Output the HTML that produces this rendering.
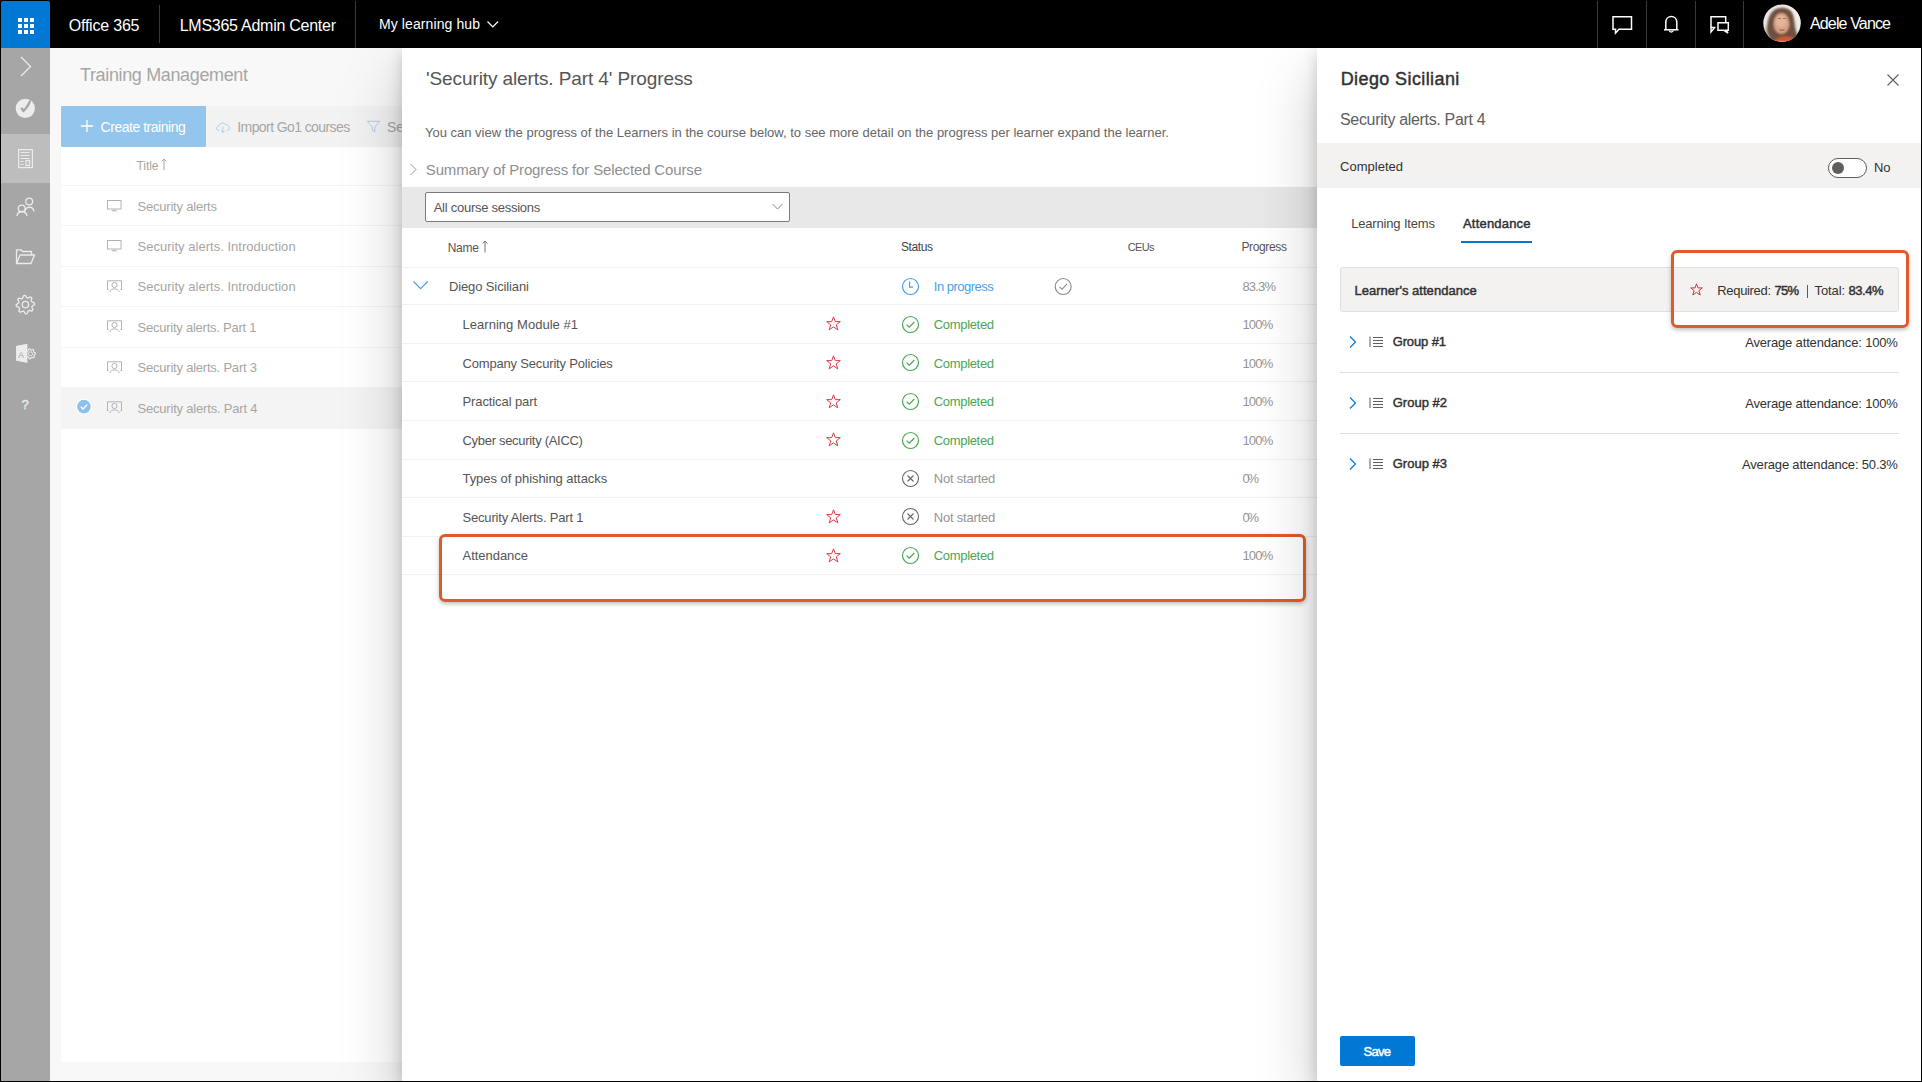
<!DOCTYPE html>
<html><head><meta charset="utf-8">
<style>
html,body{margin:0;padding:0;}
body{width:1922px;height:1082px;position:relative;overflow:hidden;background:#fff;font-family:"Liberation Sans",sans-serif;}
.t{position:absolute;white-space:nowrap;line-height:1;}
.r{position:absolute;}
svg{position:absolute;overflow:visible;}
</style></head><body>
<div class="r" style="left:0px;top:48px;width:50px;height:1034px;background:#a6a6a6;"></div>
<div class="r" style="left:1px;top:134px;width:49px;height:49px;background:#bdbdbd;"></div>
<div class="r" style="left:50px;top:48px;width:352px;height:1034px;background:#f8f8f8;"></div>
<div class="r" style="left:61px;top:147px;width:341px;height:915px;background:#ffffff;"></div>
<div class="r" style="left:61px;top:106px;width:341px;height:41px;background:#f2f2f2;"></div>
<div class="r" style="left:61px;top:106px;width:145px;height:41px;background:#94c5ec;border-radius:1px;"></div>
<div class="r" style="left:61px;top:387px;width:341px;height:41px;background:#f4f4f4;"></div>
<div class="r" style="left:61px;top:185px;width:341px;height:1px;background:#f5f5f5;"></div>
<div class="r" style="left:61px;top:225px;width:341px;height:1px;background:#f5f5f5;"></div>
<div class="r" style="left:61px;top:266px;width:341px;height:1px;background:#f5f5f5;"></div>
<div class="r" style="left:61px;top:306px;width:341px;height:1px;background:#f5f5f5;"></div>
<div class="r" style="left:61px;top:347px;width:341px;height:1px;background:#f5f5f5;"></div>
<div class="r" style="left:61px;top:387px;width:341px;height:1px;background:#f5f5f5;"></div>
<div class="r" style="left:61px;top:428px;width:341px;height:1px;background:#f5f5f5;"></div>
<svg style="left:0px;top:48px;" width="50" height="380" viewBox="0 0 50 380">
<g fill="none" stroke="#ececec" stroke-width="1.3">
 <path d="M21 9 L30.5 18.5 L21 28"/>
</g>
<circle cx="25.3" cy="60.4" r="9.6" fill="#ececec"/>
<path d="M20.3 60.2 L22.3 59.2 L23.8 61.3 C26 58 28 55 29.5 52 L31 53.2 C30.5 56 28 60 24.5 63.5 L23 64.5 Z" fill="#a6a6a6"/>
<g fill="none" stroke="#ececec" stroke-width="1.2">
 <rect x="18.6" y="101.6" width="13.8" height="18" />
 <path d="M20.5 104.5h9 M20.5 107.5h9 M20.5 110.5h9 M20.5 113.5h3 M20.5 116.5h3"/>
 <rect x="26" y="112.5" width="3.5" height="5"/>
</g>
<g fill="none" stroke="#ececec" stroke-width="1.3">
 <circle cx="29.2" cy="153.5" r="3.4"/>
 <path d="M24.5 164 C 25.5 158, 33 157.5, 34 163.5"/>
 <circle cx="21.7" cy="160.5" r="3.4"/>
 <path d="M17 168 C 18 162, 26 162, 27 168"/>
</g>
<g fill="none" stroke="#ececec" stroke-width="1.3" stroke-linejoin="round">
 <path d="M16.5 215.5 V201.8 H21 L22.5 203.5 H31.5 V207"/>
 <path d="M16.5 215.5 L20 207 H34.5 L31 215.5 Z"/>
</g>
</svg>
<svg style="left:0px;top:0px;" width="50" height="420" viewBox="0 0 50 420">
<path d="M34.42,302.77 L34.60,304.57 L32.27,305.94 L31.88,307.26 L33.07,309.68 L31.93,311.08 L29.31,310.41 L28.10,311.06 L27.23,313.62 L25.43,313.80 L24.06,311.47 L22.74,311.08 L20.32,312.27 L18.92,311.13 L19.59,308.51 L18.94,307.30 L16.38,306.43 L16.20,304.63 L18.53,303.26 L18.92,301.94 L17.73,299.52 L18.87,298.12 L21.49,298.79 L22.70,298.14 L23.57,295.58 L25.37,295.40 L26.74,297.73 L28.06,298.12 L30.48,296.93 L31.88,298.07 L31.21,300.69 L31.86,301.90 Z" fill="none" stroke="#ececec" stroke-width="1.3" stroke-linejoin="round"/>
<circle cx="25.4" cy="304.6" r="3.2" fill="none" stroke="#ececec" stroke-width="1.3"/>
<path d="M16.2 346 L27.2 344 V362.7 L16.2 360.5 Z" fill="#ececec"/>
<text x="18.3" y="357.5" font-family="Liberation Sans" font-size="8.5" fill="#a6a6a6">A</text>
<path d="M35.40,352.81 L35.50,353.92 L34.18,354.74 L33.88,355.53 L34.33,357.01 L33.52,357.78 L32.06,357.26 L31.25,357.52 L30.38,358.80 L29.27,358.65 L28.77,357.18 L28.06,356.71 L26.52,356.82 L25.94,355.86 L26.78,354.55 L26.70,353.71 L25.65,352.57 L26.05,351.52 L27.59,351.36 L28.20,350.77 L28.44,349.24 L29.51,348.90 L30.59,350.00 L31.44,350.12 L32.78,349.35 L33.71,349.97 L33.53,351.50 L33.96,352.24 Z" fill="none" stroke="#ececec" stroke-width="1.1"/><circle cx="30.5" cy="353.8" r="2" fill="none" stroke="#ececec" stroke-width="1"/>
<path d="M16.2 346 L27.2 344 V362.7 L16.2 360.5 Z" fill="#ececec"/>
<text x="18.3" y="357.5" font-family="Liberation Sans" font-size="8.5" fill="#a6a6a6">A</text>
<text x="21.4" y="408.6" font-family="Liberation Sans" font-size="13" fill="#ececec" stroke="#ececec" stroke-width="0.4">?</text>
</svg>
<div class="t" style="left:80.00px;top:66.00px;font-size:18px;color:#a8a6a4;letter-spacing:-0.358px;">Training Management</div>
<div class="t" style="left:100.60px;top:120.00px;font-size:14px;color:#ffffff;letter-spacing:-0.475px;">Create training</div>
<svg style="left:80px;top:119px;" width="14" height="14" viewBox="0 0 14 14"><path d="M7 1 V13 M1 7 H13" stroke="#fff" stroke-width="1.3"/></svg>
<svg style="left:214px;top:120px;" width="20" height="16" viewBox="0 0 20 16"><path d="M5 10.5 C1.8 10.5 1.5 6.5 4.8 6 C5.2 3 9.8 2 11.6 4.6 C14.8 4.2 16.2 7.5 14.8 9.8 C14 10.5 13.2 10.5 12.8 10.5" fill="none" stroke="#b9c9e3" stroke-width="1"/><path d="M8.8 6.5 V12.5 M6.8 10.5 L8.8 12.5 L10.8 10.5" fill="none" stroke="#b9c9e3" stroke-width="1"/></svg>
<div class="t" style="left:237.30px;top:120.00px;font-size:14px;color:#a8a6a4;letter-spacing:-0.591px;">Import Go1 courses</div>
<svg style="left:366px;top:120px;" width="16" height="14" viewBox="0 0 16 14"><path d="M1.3 1.3 H13.7 L8.8 7 V11.8 L6.2 10.2 V7 Z" fill="none" stroke="#b9c9e3" stroke-width="1"/></svg>
<div class="t" style="left:387.00px;top:120.00px;font-size:14px;color:#a8a6a4;">Se</div>
<div class="t" style="left:136.50px;top:160.00px;font-size:12px;color:#a8a6a4;letter-spacing:-0.062px;">Title</div>
<svg style="left:161px;top:158px;" width="6" height="14" viewBox="0 0 6 14"><path d="M3 1 V12 M0.8 3.2 L3 1 L5.2 3.2" fill="none" stroke="#a8a6a4" stroke-width="1"/></svg>
<div class="t" style="left:137.50px;top:200.00px;font-size:13px;color:#a8a6a4;letter-spacing:-0.204px;">Security alerts</div>
<svg style="left:106px;top:200.0px;" width="16" height="12" viewBox="0 0 16 12"><rect x="1.5" y="0.5" width="13.5" height="8.5" fill="none" stroke="#b5b0bb" stroke-width="1"/><path d="M8.2 9 V10.5 M5.5 10.8 H11" stroke="#b5b0bb" stroke-width="1"/></svg>
<div class="t" style="left:137.50px;top:240.00px;font-size:13px;color:#a8a6a4;letter-spacing:0.021px;">Security alerts. Introduction</div>
<svg style="left:106px;top:240.4px;" width="16" height="12" viewBox="0 0 16 12"><rect x="1.5" y="0.5" width="13.5" height="8.5" fill="none" stroke="#b5b0bb" stroke-width="1"/><path d="M8.2 9 V10.5 M5.5 10.8 H11" stroke="#b5b0bb" stroke-width="1"/></svg>
<div class="t" style="left:137.50px;top:280.00px;font-size:13px;color:#a8a6a4;letter-spacing:0.021px;">Security alerts. Introduction</div>
<svg style="left:106px;top:279.79999999999995px;" width="17" height="13" viewBox="0 0 17 13"><path d="M1.5 9.5 V0.8 H15.5 V9.5 M0.8 9.5 H2.5 M14.5 9.5 H16.2" fill="none" stroke="#b5b0bb" stroke-width="1"/><circle cx="8.5" cy="5" r="2.6" fill="none" stroke="#b5b0bb" stroke-width="1"/><path d="M3.8 12 C4.5 7.8 12.5 7.8 13.2 12" fill="none" stroke="#b5b0bb" stroke-width="1"/></svg>
<div class="t" style="left:137.50px;top:321.00px;font-size:13px;color:#a8a6a4;letter-spacing:-0.239px;">Security alerts. Part 1</div>
<svg style="left:106px;top:320.19999999999993px;" width="17" height="13" viewBox="0 0 17 13"><path d="M1.5 9.5 V0.8 H15.5 V9.5 M0.8 9.5 H2.5 M14.5 9.5 H16.2" fill="none" stroke="#b5b0bb" stroke-width="1"/><circle cx="8.5" cy="5" r="2.6" fill="none" stroke="#b5b0bb" stroke-width="1"/><path d="M3.8 12 C4.5 7.8 12.5 7.8 13.2 12" fill="none" stroke="#b5b0bb" stroke-width="1"/></svg>
<div class="t" style="left:137.50px;top:361.00px;font-size:13px;color:#a8a6a4;letter-spacing:-0.216px;">Security alerts. Part 3</div>
<svg style="left:106px;top:360.59999999999997px;" width="17" height="13" viewBox="0 0 17 13"><path d="M1.5 9.5 V0.8 H15.5 V9.5 M0.8 9.5 H2.5 M14.5 9.5 H16.2" fill="none" stroke="#b5b0bb" stroke-width="1"/><circle cx="8.5" cy="5" r="2.6" fill="none" stroke="#b5b0bb" stroke-width="1"/><path d="M3.8 12 C4.5 7.8 12.5 7.8 13.2 12" fill="none" stroke="#b5b0bb" stroke-width="1"/></svg>
<div class="t" style="left:137.50px;top:402.00px;font-size:13px;color:#a8a6a4;letter-spacing:-0.193px;">Security alerts. Part 4</div>
<svg style="left:106px;top:401.0px;" width="17" height="13" viewBox="0 0 17 13"><path d="M1.5 9.5 V0.8 H15.5 V9.5 M0.8 9.5 H2.5 M14.5 9.5 H16.2" fill="none" stroke="#b5b0bb" stroke-width="1"/><circle cx="8.5" cy="5" r="2.6" fill="none" stroke="#b5b0bb" stroke-width="1"/><path d="M3.8 12 C4.5 7.8 12.5 7.8 13.2 12" fill="none" stroke="#b5b0bb" stroke-width="1"/></svg>
<svg style="left:74px;top:397px;" width="20" height="20" viewBox="0 0 20 20"><circle cx="9.9" cy="9.6" r="8" fill="#ffffff"/><circle cx="9.9" cy="9.6" r="6.8" fill="#8dc0ea"/><path d="M6.8 9.8 L9 12 L13.2 7.6" fill="none" stroke="#fff" stroke-width="1.3"/></svg>
<div class="r" style="left:402px;top:48px;width:915px;height:1034px;background:#ffffff;box-shadow:0 25.6px 57.6px 0 rgba(0,0,0,.22),0 4.8px 14.4px 0 rgba(0,0,0,.18);"></div>
<div class="r" style="left:402px;top:187px;width:915px;height:41px;background:#e8e8e8;"></div>
<div class="r" style="left:425px;top:192px;width:365px;height:30px;background:#ffffff;box-sizing:border-box;border:1px solid #7a7a7a;border-radius:2px;"></div>
<svg style="left:771px;top:202px;" width="14" height="10" viewBox="0 0 14 10"><path d="M1.5 2 L6.5 7 L11.5 2" fill="none" stroke="#888" stroke-width="1"/></svg>
<div class="t" style="left:426.00px;top:69.00px;font-size:19px;color:#555;letter-spacing:-0.103px;">'Security alerts. Part 4' Progress</div>
<div class="t" style="left:425.00px;top:126.00px;font-size:13px;color:#666;">You can view the progress of the Learners in the course below, to see more detail on the progress per learner expand the learner.</div>
<svg style="left:408px;top:162px;" width="10" height="16" viewBox="0 0 10 16"><path d="M2.5 2 L8 7.5 L2.5 13" fill="none" stroke="#999" stroke-width="1"/></svg>
<div class="t" style="left:425.80px;top:162.00px;font-size:15px;color:#8f8f8f;letter-spacing:-0.147px;">Summary of Progress for Selected Course</div>
<div class="t" style="left:433.70px;top:201.00px;font-size:13px;color:#555;letter-spacing:-0.258px;">All course sessions</div>
<div class="t" style="left:447.70px;top:242.00px;font-size:12px;color:#555;letter-spacing:-0.233px;">Name</div>
<svg style="left:481px;top:240px;" width="8" height="14" viewBox="0 0 8 14"><path d="M4 1 V12.5 M1.5 3.5 L4 1 L6.5 3.5" fill="none" stroke="#777" stroke-width="1"/></svg>
<div class="t" style="left:901.00px;top:241.00px;font-size:12px;color:#444;letter-spacing:-0.400px;">Status</div>
<div class="t" style="left:1127.80px;top:242.00px;font-size:11px;color:#555;letter-spacing:-0.667px;">CEUs</div>
<div class="t" style="left:1241.40px;top:241.00px;font-size:12px;color:#555;letter-spacing:-0.343px;">Progress</div>
<div class="r" style="left:402px;top:267px;width:915px;height:1px;background:#f1f1f1;"></div>
<div class="r" style="left:402px;top:304px;width:915px;height:1px;background:#f1f1f1;"></div>
<div class="r" style="left:402px;top:343px;width:915px;height:1px;background:#f1f1f1;"></div>
<div class="r" style="left:402px;top:381px;width:915px;height:1px;background:#f1f1f1;"></div>
<div class="r" style="left:402px;top:420px;width:915px;height:1px;background:#f1f1f1;"></div>
<div class="r" style="left:402px;top:459px;width:915px;height:1px;background:#f1f1f1;"></div>
<div class="r" style="left:402px;top:497px;width:915px;height:1px;background:#f1f1f1;"></div>
<div class="r" style="left:402px;top:536px;width:915px;height:1px;background:#f1f1f1;"></div>
<div class="r" style="left:402px;top:574px;width:915px;height:1px;background:#f1f1f1;"></div>
<div class="t" style="left:448.90px;top:280.00px;font-size:13px;color:#555;letter-spacing:-0.111px;">Diego Siciliani</div>
<svg style="left:901px;top:276.5px;" width="19" height="19" viewBox="0 0 19 19"><circle cx="9.5" cy="9.5" r="8" fill="none" stroke="#4a9fe6" stroke-width="1.2"/><path d="M8.6 4.5 V10.2 H12" fill="none" stroke="#4a9fe6" stroke-width="1.2"/></svg>
<div class="t" style="left:933.80px;top:280.00px;font-size:13px;color:#4a9fe6;letter-spacing:-0.515px;">In progress</div>
<svg style="left:1054px;top:276.5px;" width="19" height="19" viewBox="0 0 19 19"><circle cx="9.2" cy="9.5" r="8" fill="none" stroke="#888" stroke-width="1.1"/><path d="M5.5 9.8 L8 12.3 L13 6.8" fill="none" stroke="#888" stroke-width="1.1"/></svg>
<div class="t" style="left:1242.40px;top:280.00px;font-size:13px;color:#959595;letter-spacing:-0.813px;">83.3%</div>
<div class="t" style="left:462.50px;top:318.00px;font-size:13px;color:#555;letter-spacing:0.035px;">Learning Module #1</div>
<svg style="left:826px;top:316.3px;" width="15" height="15" viewBox="0 0 15 15"><path d="M7.5 0.8 L9.3 5.6 L14.3 5.6 L10.3 8.8 L11.8 13.9 L7.5 10.9 L3.2 13.9 L4.7 8.8 L0.7 5.6 L5.7 5.6 Z" fill="none" stroke="#e3394a" stroke-width="1" stroke-linejoin="miter"/></svg>
<svg style="left:901px;top:314.8px;" width="19" height="19" viewBox="0 0 19 19"><circle cx="9.5" cy="9.5" r="8" fill="none" stroke="#4aa652" stroke-width="1.2"/><path d="M5.6 9.6 L8.3 12.2 L13.3 7" fill="none" stroke="#4aa652" stroke-width="1.2"/></svg>
<div class="t" style="left:933.80px;top:318.00px;font-size:13px;color:#4aa652;letter-spacing:-0.331px;">Completed</div>
<div class="t" style="left:1242.40px;top:318.00px;font-size:13px;color:#959595;letter-spacing:-0.750px;">100%</div>
<div class="t" style="left:462.50px;top:357.00px;font-size:13px;color:#555;letter-spacing:-0.179px;">Company Security Policies</div>
<svg style="left:826px;top:354.9px;" width="15" height="15" viewBox="0 0 15 15"><path d="M7.5 0.8 L9.3 5.6 L14.3 5.6 L10.3 8.8 L11.8 13.9 L7.5 10.9 L3.2 13.9 L4.7 8.8 L0.7 5.6 L5.7 5.6 Z" fill="none" stroke="#e3394a" stroke-width="1" stroke-linejoin="miter"/></svg>
<svg style="left:901px;top:353.4px;" width="19" height="19" viewBox="0 0 19 19"><circle cx="9.5" cy="9.5" r="8" fill="none" stroke="#4aa652" stroke-width="1.2"/><path d="M5.6 9.6 L8.3 12.2 L13.3 7" fill="none" stroke="#4aa652" stroke-width="1.2"/></svg>
<div class="t" style="left:933.80px;top:357.00px;font-size:13px;color:#4aa652;letter-spacing:-0.331px;">Completed</div>
<div class="t" style="left:1242.40px;top:357.00px;font-size:13px;color:#959595;letter-spacing:-0.750px;">100%</div>
<div class="t" style="left:462.50px;top:395.00px;font-size:13px;color:#555;letter-spacing:-0.104px;">Practical part</div>
<svg style="left:826px;top:393.5px;" width="15" height="15" viewBox="0 0 15 15"><path d="M7.5 0.8 L9.3 5.6 L14.3 5.6 L10.3 8.8 L11.8 13.9 L7.5 10.9 L3.2 13.9 L4.7 8.8 L0.7 5.6 L5.7 5.6 Z" fill="none" stroke="#e3394a" stroke-width="1" stroke-linejoin="miter"/></svg>
<svg style="left:901px;top:392px;" width="19" height="19" viewBox="0 0 19 19"><circle cx="9.5" cy="9.5" r="8" fill="none" stroke="#4aa652" stroke-width="1.2"/><path d="M5.6 9.6 L8.3 12.2 L13.3 7" fill="none" stroke="#4aa652" stroke-width="1.2"/></svg>
<div class="t" style="left:933.80px;top:395.00px;font-size:13px;color:#4aa652;letter-spacing:-0.331px;">Completed</div>
<div class="t" style="left:1242.40px;top:395.00px;font-size:13px;color:#959595;letter-spacing:-0.750px;">100%</div>
<div class="t" style="left:462.50px;top:434.00px;font-size:13px;color:#555;letter-spacing:-0.300px;">Cyber security (AICC)</div>
<svg style="left:826px;top:432.0px;" width="15" height="15" viewBox="0 0 15 15"><path d="M7.5 0.8 L9.3 5.6 L14.3 5.6 L10.3 8.8 L11.8 13.9 L7.5 10.9 L3.2 13.9 L4.7 8.8 L0.7 5.6 L5.7 5.6 Z" fill="none" stroke="#e3394a" stroke-width="1" stroke-linejoin="miter"/></svg>
<svg style="left:901px;top:430.5px;" width="19" height="19" viewBox="0 0 19 19"><circle cx="9.5" cy="9.5" r="8" fill="none" stroke="#4aa652" stroke-width="1.2"/><path d="M5.6 9.6 L8.3 12.2 L13.3 7" fill="none" stroke="#4aa652" stroke-width="1.2"/></svg>
<div class="t" style="left:933.80px;top:434.00px;font-size:13px;color:#4aa652;letter-spacing:-0.331px;">Completed</div>
<div class="t" style="left:1242.40px;top:434.00px;font-size:13px;color:#959595;letter-spacing:-0.750px;">100%</div>
<div class="t" style="left:462.50px;top:472.00px;font-size:13px;color:#555;letter-spacing:-0.052px;">Types of phishing attacks</div>
<svg style="left:901px;top:468.9px;" width="19" height="19" viewBox="0 0 19 19"><circle cx="9.5" cy="9.5" r="8" fill="none" stroke="#666" stroke-width="1.1"/><path d="M6.5 6.5 L12.5 12.5 M12.5 6.5 L6.5 12.5" fill="none" stroke="#666" stroke-width="1.1"/></svg>
<div class="t" style="left:933.80px;top:472.00px;font-size:13px;color:#959595;letter-spacing:-0.210px;">Not started</div>
<div class="t" style="left:1242.40px;top:472.00px;font-size:13px;color:#959595;letter-spacing:-2.200px;">0%</div>
<div class="t" style="left:462.50px;top:511.00px;font-size:13px;color:#555;letter-spacing:-0.177px;">Security Alerts. Part 1</div>
<svg style="left:826px;top:508.9px;" width="15" height="15" viewBox="0 0 15 15"><path d="M7.5 0.8 L9.3 5.6 L14.3 5.6 L10.3 8.8 L11.8 13.9 L7.5 10.9 L3.2 13.9 L4.7 8.8 L0.7 5.6 L5.7 5.6 Z" fill="none" stroke="#e3394a" stroke-width="1" stroke-linejoin="miter"/></svg>
<svg style="left:901px;top:507.4px;" width="19" height="19" viewBox="0 0 19 19"><circle cx="9.5" cy="9.5" r="8" fill="none" stroke="#666" stroke-width="1.1"/><path d="M6.5 6.5 L12.5 12.5 M12.5 6.5 L6.5 12.5" fill="none" stroke="#666" stroke-width="1.1"/></svg>
<div class="t" style="left:933.80px;top:511.00px;font-size:13px;color:#959595;letter-spacing:-0.210px;">Not started</div>
<div class="t" style="left:1242.40px;top:511.00px;font-size:13px;color:#959595;letter-spacing:-2.200px;">0%</div>
<div class="t" style="left:462.50px;top:549.00px;font-size:13px;color:#555;letter-spacing:-0.028px;">Attendance</div>
<svg style="left:826px;top:547.5px;" width="15" height="15" viewBox="0 0 15 15"><path d="M7.5 0.8 L9.3 5.6 L14.3 5.6 L10.3 8.8 L11.8 13.9 L7.5 10.9 L3.2 13.9 L4.7 8.8 L0.7 5.6 L5.7 5.6 Z" fill="none" stroke="#e3394a" stroke-width="1" stroke-linejoin="miter"/></svg>
<svg style="left:901px;top:546px;" width="19" height="19" viewBox="0 0 19 19"><circle cx="9.5" cy="9.5" r="8" fill="none" stroke="#4aa652" stroke-width="1.2"/><path d="M5.6 9.6 L8.3 12.2 L13.3 7" fill="none" stroke="#4aa652" stroke-width="1.2"/></svg>
<div class="t" style="left:933.80px;top:549.00px;font-size:13px;color:#4aa652;letter-spacing:-0.331px;">Completed</div>
<div class="t" style="left:1242.40px;top:549.00px;font-size:13px;color:#959595;letter-spacing:-0.750px;">100%</div>
<svg style="left:412px;top:279px;" width="18" height="12" viewBox="0 0 18 12"><path d="M1.5 2.5 L8.6 9.6 L15.7 2.5" fill="none" stroke="#4a9fe6" stroke-width="1.2"/></svg>
<div class="r" style="left:438.5px;top:534px;width:867.5px;height:68px;background:transparent;box-sizing:border-box;border:3px solid #e05a2a;border-radius:6px;box-shadow:0 2px 4px rgba(0,0,0,.25);"></div>
<div class="r" style="left:1317px;top:48px;width:605px;height:1034px;background:#ffffff;box-shadow:0 25.6px 57.6px 0 rgba(0,0,0,.22),0 4.8px 14.4px 0 rgba(0,0,0,.18);"></div>
<div class="r" style="left:1317px;top:143px;width:604px;height:45px;background:#f3f2f1;"></div>
<div class="t" style="left:1340.70px;top:70.00px;font-size:18px;color:#323130;-webkit-text-stroke:0.45px #323130;letter-spacing:0.396px;">Diego Siciliani</div>
<svg style="left:1886px;top:73px;" width="14" height="14" viewBox="0 0 14 14"><path d="M1.5 1.5 L12.5 12.5 M12.5 1.5 L1.5 12.5" stroke="#605e5c" stroke-width="1.1"/></svg>
<div class="t" style="left:1340.00px;top:112.00px;font-size:16px;color:#605e5c;letter-spacing:-0.334px;">Security alerts. Part 4</div>
<div class="t" style="left:1340.00px;top:160.00px;font-size:13px;color:#323130;letter-spacing:0.019px;">Completed</div>
<div class="r" style="left:1827.5px;top:157.5px;width:39px;height:20px;background:#fff;box-sizing:border-box;border:1px solid #605e5c;border-radius:10px;"></div>
<div class="r" style="left:1832px;top:161.5px;width:12px;height:12px;background:#605e5c;border-radius:50%;"></div>
<div class="t" style="left:1874.00px;top:161.00px;font-size:13px;color:#323130;letter-spacing:-0.100px;">No</div>
<div class="t" style="left:1351.20px;top:217.00px;font-size:13px;color:#484644;letter-spacing:-0.169px;">Learning Items</div>
<div class="t" style="left:1463.00px;top:217.00px;font-size:13px;color:#323130;-webkit-text-stroke:0.45px #323130;letter-spacing:0.194px;">Attendance</div>
<div class="r" style="left:1461px;top:241px;width:71px;height:2px;background:#0078d4;"></div>
<div class="r" style="left:1340px;top:267px;width:559px;height:45px;background:#f3f2f1;box-sizing:border-box;border:1px solid #e1dfdd;border-radius:3px;"></div>
<div class="t" style="left:1354.40px;top:284.00px;font-size:13px;color:#323130;-webkit-text-stroke:0.45px #323130;letter-spacing:0.029px;">Learner's attendance</div>
<svg style="left:1689.5px;top:283px;" width="14" height="14" viewBox="0 0 14 14"><path d="M6.5 0.8 L8 4.9 L12.3 4.9 L8.9 7.6 L10.2 12 L6.5 9.4 L2.8 12 L4.1 7.6 L0.7 4.9 L5 4.9 Z" fill="none" stroke="#d13438" stroke-width="1"/></svg>
<div class="t" style="left:1717.30px;top:284.00px;font-size:13px;color:#323130;letter-spacing:-0.331px;">Required:</div>
<div class="t" style="left:1774.50px;top:284.00px;font-size:13px;color:#323130;-webkit-text-stroke:0.45px #323130;letter-spacing:-0.750px;">75%</div>
<div class="r" style="left:1806.5px;top:285px;width:1px;height:13px;background:#5a5a5a;"></div>
<div class="t" style="left:1814.50px;top:284.00px;font-size:13px;color:#323130;letter-spacing:-0.110px;">Total:</div>
<div class="t" style="left:1848.50px;top:284.00px;font-size:13px;color:#323130;-webkit-text-stroke:0.45px #323130;letter-spacing:-0.463px;">83.4%</div>
<div class="t" style="left:1392.70px;top:335.00px;font-size:13px;color:#323130;-webkit-text-stroke:0.45px #323130;letter-spacing:-0.129px;">Group #1</div>
<div class="t" style="left:1745.20px;top:336.00px;font-size:13px;color:#323130;letter-spacing:-0.170px;">Average attendance: 100%</div>
<svg style="left:1347px;top:335px;" width="12" height="14" viewBox="0 0 12 14"><path d="M3 1.5 L8.5 7 L3 12.5" fill="none" stroke="#0078d4" stroke-width="1.2"/></svg>
<svg style="left:1369px;top:336px;" width="16" height="12" viewBox="0 0 16 12"><path d="M1 0.5 V11 M4 1.5 H14 M4 4.5 H14 M4 7.5 H14 M4 10.5 H14" fill="none" stroke="#605e5c" stroke-width="1"/></svg>
<div class="t" style="left:1392.70px;top:396.00px;font-size:13px;color:#323130;-webkit-text-stroke:0.45px #323130;letter-spacing:0.014px;">Group #2</div>
<div class="t" style="left:1745.20px;top:397.00px;font-size:13px;color:#323130;letter-spacing:-0.170px;">Average attendance: 100%</div>
<svg style="left:1347px;top:396px;" width="12" height="14" viewBox="0 0 12 14"><path d="M3 1.5 L8.5 7 L3 12.5" fill="none" stroke="#0078d4" stroke-width="1.2"/></svg>
<svg style="left:1369px;top:397px;" width="16" height="12" viewBox="0 0 16 12"><path d="M1 0.5 V11 M4 1.5 H14 M4 4.5 H14 M4 7.5 H14 M4 10.5 H14" fill="none" stroke="#605e5c" stroke-width="1"/></svg>
<div class="t" style="left:1392.70px;top:457.00px;font-size:13px;color:#323130;-webkit-text-stroke:0.45px #323130;letter-spacing:0.014px;">Group #3</div>
<div class="t" style="left:1742.00px;top:458.00px;font-size:13px;color:#323130;letter-spacing:-0.179px;">Average attendance: 50.3%</div>
<svg style="left:1347px;top:457px;" width="12" height="14" viewBox="0 0 12 14"><path d="M3 1.5 L8.5 7 L3 12.5" fill="none" stroke="#0078d4" stroke-width="1.2"/></svg>
<svg style="left:1369px;top:458px;" width="16" height="12" viewBox="0 0 16 12"><path d="M1 0.5 V11 M4 1.5 H14 M4 4.5 H14 M4 7.5 H14 M4 10.5 H14" fill="none" stroke="#605e5c" stroke-width="1"/></svg>
<div class="r" style="left:1340px;top:372px;width:559px;height:1px;background:#e1dfdd;"></div>
<div class="r" style="left:1340px;top:433px;width:559px;height:1px;background:#e1dfdd;"></div>
<div class="r" style="left:1340px;top:1036px;width:75px;height:30px;background:#0078d4;border-radius:2px;"></div>
<div class="t" style="left:1363.60px;top:1045.00px;font-size:13px;color:#fff;-webkit-text-stroke:0.45px #fff;letter-spacing:-0.783px;">Save</div>
<div class="r" style="left:1671px;top:250px;width:238px;height:78px;background:transparent;box-sizing:border-box;border:3px solid #e05a2a;border-radius:6px;box-shadow:0 2px 4px rgba(0,0,0,.25);"></div>
<div class="r" style="left:0px;top:0px;width:1922px;height:48px;background:#000;"></div>
<div class="r" style="left:1px;top:1px;width:49px;height:47px;background:#0078d4;border-radius:2px 2px 0 0;"></div>
<div class="r" style="left:18px;top:18px;width:4px;height:4px;background:#fff;"></div>
<div class="r" style="left:24px;top:18px;width:4px;height:4px;background:#fff;"></div>
<div class="r" style="left:30px;top:18px;width:4px;height:4px;background:#fff;"></div>
<div class="r" style="left:18px;top:24px;width:4px;height:4px;background:#fff;"></div>
<div class="r" style="left:24px;top:24px;width:4px;height:4px;background:#fff;"></div>
<div class="r" style="left:30px;top:24px;width:4px;height:4px;background:#fff;"></div>
<div class="r" style="left:18px;top:30px;width:4px;height:4px;background:#fff;"></div>
<div class="r" style="left:24px;top:30px;width:4px;height:4px;background:#fff;"></div>
<div class="r" style="left:30px;top:30px;width:4px;height:4px;background:#fff;"></div>
<div class="t" style="left:68.70px;top:18.00px;font-size:16px;color:#fff;letter-spacing:-0.206px;">Office 365</div>
<div class="r" style="left:159px;top:5px;width:1px;height:38px;background:#3a3a3a;"></div>
<div class="t" style="left:179.70px;top:18.00px;font-size:16px;color:#fff;letter-spacing:-0.261px;">LMS365 Admin Center</div>
<div class="r" style="left:355px;top:1px;width:1px;height:47px;background:#3a3a3a;"></div>
<div class="t" style="left:379.00px;top:17.00px;font-size:14px;color:#fff;letter-spacing:0.100px;">My learning hub</div>
<svg style="left:486px;top:20px;" width="14" height="9" viewBox="0 0 14 9"><path d="M1.5 1.5 L6.8 6.8 L12.1 1.5" fill="none" stroke="#fff" stroke-width="1.2"/></svg>
<div class="r" style="left:1597px;top:1px;width:1px;height:47px;background:#3a3a3a;"></div>
<div class="r" style="left:1646px;top:1px;width:1px;height:47px;background:#3a3a3a;"></div>
<div class="r" style="left:1695px;top:1px;width:1px;height:47px;background:#3a3a3a;"></div>
<div class="r" style="left:1743px;top:1px;width:1px;height:47px;background:#3a3a3a;"></div>
<svg style="left:1610px;top:14px;" width="24" height="22" viewBox="0 0 24 22"><path d="M3 2.8 H21.5 V15.2 H9 L5.5 19 V15.2 H3 Z" fill="none" stroke="#fff" stroke-width="1.5" stroke-linejoin="miter"/></svg>
<svg style="left:1662px;top:14px;" width="20" height="22" viewBox="0 0 20 22"><path d="M3.8 15.5 V8.5 C3.8 4.5 6.5 2.6 9.3 2.6 C12.1 2.6 14.8 4.5 14.8 8.5 V15.5" fill="none" stroke="#fff" stroke-width="1.5"/><path d="M2 15.8 H16.5" stroke="#fff" stroke-width="1.5"/><path d="M7.3 16.5 C7.5 18.5 11 18.5 11.2 16.5" fill="none" stroke="#fff" stroke-width="1.3"/></svg>
<svg style="left:1708px;top:14px;" width="24" height="22" viewBox="0 0 24 22"><path d="M7.5 13.6 H3 V2.8 H17.7 V8" fill="none" stroke="#fff" stroke-width="1.5"/><path d="M3 13.6 V18 L6.5 13.6" fill="none" stroke="#fff" stroke-width="1.4"/><path d="M10 8.8 H20.3 V16.2 H18 L20 19 L15.5 16.2 H10 Z" fill="none" stroke="#fff" stroke-width="1.5" stroke-linejoin="miter"/></svg>
<svg style="left:1763px;top:4px;" width="38" height="38" viewBox="0 0 38 38">
<defs><clipPath id="avc"><circle cx="19" cy="19.2" r="18.7"/></clipPath>
<filter id="avb" x="-20%" y="-20%" width="140%" height="140%"><feGaussianBlur stdDeviation="1.1"/></filter></defs>
<g clip-path="url(#avc)">
<rect x="0" y="0" width="38" height="38" fill="#ece9e6"/>
<g filter="url(#avb)">
<path d="M4 38 C3 26 4 14 9 8 C13 3 23 2 28 7 C32 12 31 22 34 30 L35 38 Z" fill="#6e5040"/>
<path d="M2 20 C4 28 6 34 9 38 L2 38 Z" fill="#c9b79a"/>
<ellipse cx="18.5" cy="19.5" rx="7.8" ry="10.5" fill="#d8a488"/>
<ellipse cx="18" cy="17" rx="5.5" ry="6" fill="#e4b59a"/>
<path d="M10 38 C14 32 26 30 34 36 L34 38 Z" fill="#d4582e"/>
<path d="M27 4 C33 8 35 16 38 22 L38 0 L22 0 Z" fill="#f4f2f0"/>
</g>
<path d="M15 14.5 h3 M20 14.5 h3" stroke="#6a4a3c" stroke-width="1" opacity="0.6"/>
<path d="M16.5 25.5 C18 26.5 20 26.5 21.5 25.5" stroke="#8a4a44" stroke-width="1.2" fill="none" opacity="0.7"/>
</g></svg>
<div class="t" style="left:1810.00px;top:16.00px;font-size:16px;color:#fff;letter-spacing:-0.855px;">Adele Vance</div>
<div class="r" style="left:0px;top:0px;width:1px;height:1082px;background:#000;"></div>
<div class="r" style="left:1921px;top:0px;width:1px;height:1082px;background:#000;"></div>
<div class="r" style="left:0px;top:1081px;width:1922px;height:1px;background:#000;"></div></body></html>
